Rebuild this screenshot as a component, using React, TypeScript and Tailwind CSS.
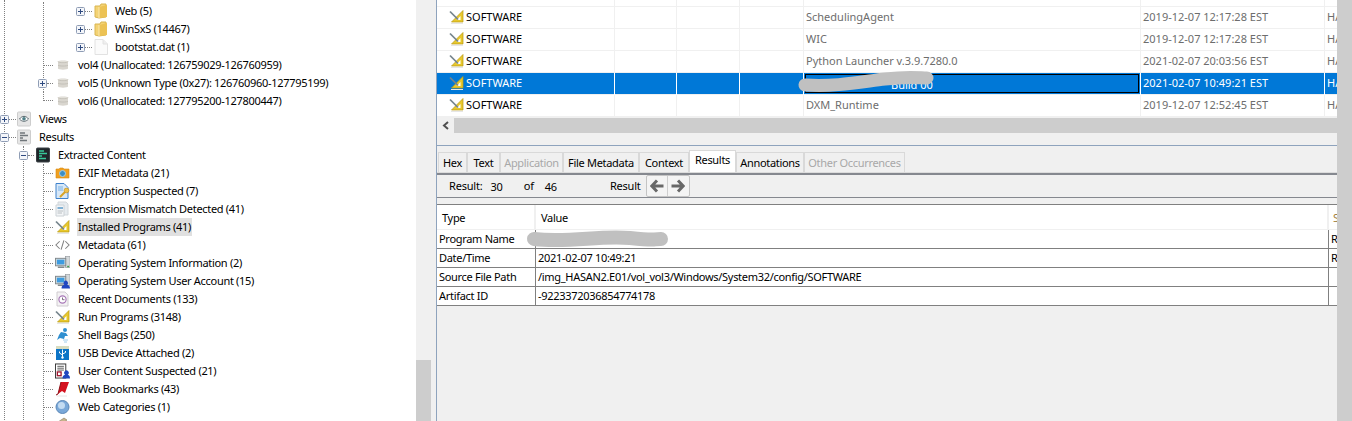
import type { ReactNode } from "react";

const FONT = "font-['Noto_Sans',sans-serif]";

function Box({ open = false }: { open?: boolean }) {
  return (
    <svg width="9" height="9" viewBox="0 0 9 9" className="relative z-10 -ml-[5px] shrink-0 bg-white">
      <rect x="0.5" y="0.5" width="8" height="8" rx="1" fill="#f4f6fa" stroke="#8f9db5" />
      <path d={open ? "M2 4.5H7" : "M2 4.5H7M4.5 2V7"} stroke="#2e4a80" />
    </svg>
  );
}

function Tick({ w = 9, last = false }: { w?: number; last?: boolean }) {
  return (
    <span
      className={
        last
          ? "h-[9px] self-start shrink-0 border-l border-b border-dotted border-[#808080]"
          : "shrink-0 border-t border-dotted border-[#808080]"
      }
      style={{ width: w }}
    />
  );
}

const Folder = () => (
  <svg width="14" height="16" viewBox="0 0 14 16">
    <path d="M1 3H6L7 1H12V14L5 15L1 14Z" fill="#f4d374" stroke="#d9b653" />
    <path d="M5 4L13 2V14L5 15Z" fill="#ecc254" />
    <path d="M5 4V15" stroke="#fbe9b0" />
  </svg>
);

const Page = () => (
  <svg width="14" height="16" viewBox="0 0 14 16">
    <path d="M1 0.5H9L13.5 5V15.5H1Z" fill="#fbfbfb" stroke="#e2e2e2" />
    <path d="M9 0.5V5H13.5" fill="#efefef" stroke="#e2e2e2" />
  </svg>
);

const Disk = () => (
  <svg width="12" height="12" viewBox="0 0 12 12">
    <path d="M1 2.5C1 1 11 1 11 2.5V9.5C11 11 1 11 1 9.5Z" fill="#d9d6cf" />
    <path d="M1 2.5C1 4 11 4 11 2.5" fill="#ece9e3" stroke="#b9b6ae" strokeWidth="0.7" />
    <path d="M1 6C1 7.4 11 7.4 11 6" fill="none" stroke="#b9b6ae" strokeWidth="0.7" />
  </svg>
);

const Tile = ({ dark = false, children }: { dark?: boolean; children: ReactNode }) => (
  <svg width="14" height="16" viewBox="0 0 14 16">
    <rect
      x="0.5"
      y="1"
      width="13"
      height="14"
      rx="1"
      fill={dark ? "#20262a" : "#e6e6e6"}
      stroke={dark ? "#3a4044" : "#cdcdcd"}
    />
    {children}
  </svg>
);

const Eye = () => (
  <Tile>
    <path d="M2.5 8C5 4.5 9 4.5 11.5 8C9 11 5 11 2.5 8Z" fill="#fff" stroke="#5c6a70" />
    <circle cx="7" cy="7.8" r="1.8" fill="#4f7f87" />
  </Tile>
);

const Report = () => (
  <Tile>
    <path d="M3 4H8M3 6.5H11M3 9H6M3 11.5H10" stroke="#70767a" strokeWidth="1.3" />
  </Tile>
);

const Extracted = () => (
  <Tile dark>
    <path d="M3 4H8M3 6.5H11M3 9H6M3 11.5H10" stroke="#38c89a" strokeWidth="1.3" />
  </Tile>
);

const Camera = () => (
  <svg width="15" height="16" viewBox="0 0 15 16">
    <path d="M1 4H4L5 3H8L9 4H14V13H1Z" fill="#f0a020" stroke="#d98a10" strokeWidth="0.6" />
    <circle cx="7.5" cy="8.5" r="3" fill="#3d8ec4" stroke="#a8d0e8" />
  </svg>
);

const KeyDoc = () => (
  <svg width="15" height="16" viewBox="0 0 15 16">
    <path d="M1 0.5H9L13 4.5V15.5H1Z" fill="#d8e8f8" stroke="#3f82cc" />
    <path d="M3 3H8V8H3Z" fill="#a8cdf0" />
    <path d="M5 14L10 9" stroke="#d8a428" strokeWidth="2" />
    <circle cx="11.5" cy="7.5" r="2.4" fill="#efc04a" stroke="#bd8b1b" strokeWidth="0.6" />
  </svg>
);

const Mismatch = () => (
  <svg width="15" height="16" viewBox="0 0 15 16">
    <path d="M3 1H11L13 3V14H3Z" fill="#e6ebef" stroke="#d2d7db" />
    <path d="M1 4H9V15H1Z" fill="#f3f5f7" stroke="#ccd2d6" />
    <path d="M2.5 7H8" stroke="#4d92c4" strokeWidth="1.4" />
    <path d="M2.5 10H8M2.5 12H7" stroke="#b8bec2" />
  </svg>
);

const Ruler = () => (
  <svg width="15" height="16" viewBox="0 0 15 16">
    <path d="M14 1.5V13H2.5Z" fill="#e8c82c" stroke="#b89a16" strokeWidth="0.7" />
    <path d="M11.5 7V11H7.5Z" fill="#fff" />
    <path d="M1 2.5L9 10.5" stroke="#75848c" strokeWidth="1.7" />
    <path d="M2 14.5H14" stroke="#e6e6e6" />
  </svg>
);

const Code = () => (
  <svg width="16" height="16" viewBox="0 0 16 16" fill="none" stroke="#7e7e7e" strokeWidth="1.1">
    <path d="M5 4L1 8L5 12M11 4L15 8L11 12M9.5 3L6.5 13" />
  </svg>
);

const Computer = ({ user = false }: { user?: boolean }) => (
  <svg width="16" height="16" viewBox="0 0 16 16">
    <rect x="11" y="1" width="5" height="12" fill="#d4d8da" stroke="#8a9094" strokeWidth="0.6" />
    <rect x="0.5" y="3" width="11" height="8" fill="#cfd8dc" stroke="#7e878b" />
    <rect x="2" y="4.5" width="8" height="5" fill="#3d9be0" />
    <path d="M3 12.5H10" stroke="#70787c" strokeWidth="1.4" />
    <rect x="13" y="11" width="2" height="1.5" fill={user ? "#d4d8da" : "#3aa04a"} />
    {user && <path d="M7 16C7 12 10 12 10 12A2.4 2.4 0 1 1 13 12C13 12 16 12 16 16Z" fill="#2046c0" />}
  </svg>
);

const Recent = () => (
  <svg width="15" height="16" viewBox="0 0 15 16">
    <path d="M2 1H10L13 4V15H2Z" fill="#f4f2f4" stroke="#d0ccd0" />
    <circle cx="7.5" cy="8.5" r="3.6" fill="#fff" stroke="#a878b8" strokeWidth="1.2" />
    <path d="M7.5 6.5V8.7H9.5" fill="none" stroke="#5c4a60" strokeWidth="0.8" />
  </svg>
);

const ShellBags = () => (
  <svg width="15" height="16" viewBox="0 0 15 16">
    <circle cx="10" cy="3" r="2" fill="#2f8fd0" />
    <path d="M6 5L11 6L13 9L10 9L9 12L5 11L2 13L4 8Z" fill="#2f8fd0" />
    <path d="M8 13H13M9 15H12" stroke="#9fcdec" />
  </svg>
);

const Usb = () => (
  <svg width="15" height="16" viewBox="0 0 15 16">
    <rect x="1" y="1" width="13" height="14" fill="#0d74c6" />
    <rect x="1" y="1" width="13" height="3" fill="#d8dcc0" />
    <path d="M7.5 4.5V12.5M7.5 10L4.5 8V6.5M7.5 9L10.5 7.5V6" fill="none" stroke="#fff" />
    <circle cx="7.5" cy="12.5" r="1.2" fill="#fff" />
  </svg>
);

const UserContent = () => (
  <svg width="16" height="16" viewBox="0 0 16 16">
    <rect x="0.5" y="0.5" width="11" height="15" fill="#fff" stroke="#333" />
    <path d="M2.5 3H9.5M2.5 5H9.5M2.5 7H9.5" stroke="#555" />
    <rect x="2.5" y="9" width="4" height="4" fill="#fff" stroke="#a01830" strokeWidth="1.4" />
    <path d="M8 16C8 12 11 12 11 12A2.4 2.4 0 1 1 13.5 12C13.5 12 16 12 16 16Z" fill="#2046c0" />
  </svg>
);

const Bookmark = () => (
  <svg width="15" height="16" viewBox="0 0 15 16">
    <path d="M6 1H14L10 12L7 10L3 13Z" fill="#d4121f" />
    <path d="M6 1L3 13L1 14" fill="none" stroke="#8c0c14" />
    <path d="M2 15H12" stroke="#e6e6e6" />
  </svg>
);

const Globe = () => (
  <svg width="15" height="16" viewBox="0 0 15 16">
    <circle cx="7.5" cy="8" r="6.5" fill="#7aa8d8" stroke="#5c88b8" />
    <circle cx="6.5" cy="6.5" r="3.5" fill="#c4dcf2" />
  </svg>
);

const Tan = () => (
  <svg width="15" height="16" viewBox="0 0 15 16">
    <path d="M3 5L9 1L12 3L7 7Z" fill="#c8b48c" stroke="#8a7a5a" strokeWidth="0.6" />
  </svg>
);

function Label({ children, selected = false }: { children: ReactNode; selected?: boolean }) {
  return (
    <span
      className={`h-[18px] whitespace-nowrap px-px leading-[18px] tracking-[-0.3px] ${
        selected ? "bg-[#e0e0e0]" : ""
      }`}
    >
      {children}
    </span>
  );
}

function Leaf({ icon, label, selected }: { icon: ReactNode; label: string; selected?: boolean }) {
  return (
    <div className="flex h-[18px] items-center">
      <Tick />
      <span className="ml-[2px] mr-[7px] flex w-[15px] justify-center">{icon}</span>
      <Label selected={selected}>{label}</Label>
    </div>
  );
}

function FileRow({ icon, label }: { icon: ReactNode; label: string }) {
  return (
    <div className="flex h-[18px] items-center pl-[37px]">
      <Box />
      <Tick w={7} />
      <span className="ml-[2px] mr-[6px] flex w-[14px] justify-center">{icon}</span>
      <Label>{label}</Label>
    </div>
  );
}

function Tree() {
  const leaves: [ReactNode, string][] = [
    [<Camera />, "EXIF Metadata (21)"],
    [<KeyDoc />, "Encryption Suspected (7)"],
    [<Mismatch />, "Extension Mismatch Detected (41)"],
    [<Ruler />, "Installed Programs (41)"],
    [<Code />, "Metadata (61)"],
    [<Computer />, "Operating System Information (2)"],
    [<Computer user />, "Operating System User Account (15)"],
    [<Recent />, "Recent Documents (133)"],
    [<Ruler />, "Run Programs (3148)"],
    [<ShellBags />, "Shell Bags (250)"],
    [<Usb />, "USB Device Attached (2)"],
    [<UserContent />, "User Content Suspected (21)"],
    [<Bookmark />, "Web Bookmarks (43)"],
    [<Globe />, "Web Categories (1)"],
    [<Tan />, "Web Cookies (6)"],
  ];

  return (
    <div className="h-[421px] w-[416px] shrink-0 overflow-hidden bg-white">
      <div className="ml-[4px] border-l border-dotted border-[#808080] pt-[2px]">
        <div className="ml-[38px]">
          <div className="border-l border-dotted border-[#808080]">
            <FileRow icon={<Folder />} label="Web (5)" />
            <FileRow icon={<Folder />} label="WinSxS (14467)" />
            <FileRow icon={<Page />} label="bootstat.dat (1)" />
            <div className="flex h-[18px] items-center">
              <Tick />
              <span className="ml-[4px] mr-[8px] flex w-[12px] justify-center"><Disk /></span>
              <Label>vol4 (Unallocated: 126759029-126760959)</Label>
            </div>
            <div className="flex h-[18px] items-center">
              <span className="-ml-px flex">
                <Box />
              </span>
              <Tick w={6} />
              <span className="ml-[4px] mr-[8px] flex w-[12px] justify-center"><Disk /></span>
              <Label>vol5 (Unknown Type (0x27): 126760960-127795199)</Label>
            </div>
          </div>
          <div className="flex h-[18px] items-center">
            <Tick w={10} last />
            <span className="ml-[4px] mr-[8px] flex w-[12px] justify-center"><Disk /></span>
            <Label>vol6 (Unallocated: 127795200-127800447)</Label>
          </div>
        </div>
        <div className="flex h-[18px] items-center">
          <Box />
          <Tick w={7} />
          <span className="ml-px mr-[7px] flex w-[14px] justify-center"><Eye /></span>
          <Label>Views</Label>
        </div>
        <div className="flex h-[18px] items-center">
          <Box open />
          <Tick w={7} />
          <span className="ml-px mr-[7px] flex w-[14px] justify-center"><Report /></span>
          <Label>Results</Label>
        </div>
        <div className="ml-[18px] border-l border-dotted border-[#808080]">
          <div className="flex h-[18px] items-center">
            <Box open />
            <Tick w={6} />
            <span className="ml-[2px] mr-[7px] flex w-[14px] justify-center"><Extracted /></span>
            <Label>Extracted Content</Label>
          </div>
          <div className="ml-[19px] border-l border-dotted border-[#808080]">
            {leaves.map(([icon, label]) => (
              <Leaf key={label} icon={icon} label={label} selected={label.startsWith("Installed")} />
            ))}
          </div>
        </div>
      </div>
    </div>
  );
}

const ROW_COLS = "grid grid-cols-[178px_62px_63px_64px_337px_184px_12px]";

type Row = { name: string; date: string; selected?: boolean };

const ROWS: Row[] = [
  { name: "SchedulingAgent", date: "2019-12-07 12:17:28 EST" },
  { name: "WIC", date: "2019-12-07 12:17:28 EST" },
  { name: "Python Launcher v.3.9.7280.0", date: "2021-02-07 20:03:56 EST" },
  { name: "Build 00", date: "2021-02-07 10:49:21 EST", selected: true },
  { name: "DXM_Runtime", date: "2019-12-07 12:52:45 EST" },
];

function ProgramRow({ row }: { row: Row }) {
  const line = row.selected ? "border-r border-white" : "border-r border-[#f0f0f0]";
  const tone = row.selected ? "text-white" : "text-[#6d6d6d]";
  return (
    <div
      className={`${ROW_COLS} h-[22px] border-b leading-[20px] ${
        row.selected ? "border-[#f0f0f0] bg-[#0078d7]" : "border-[#f0f0f0] bg-white"
      }`}
    >
      <div className={`flex items-center pb-[2px] pl-[12px] ${line} ${row.selected ? "text-white" : "text-black"}`}>
        <Ruler />
        <span className="ml-[2px]">SOFTWARE</span>
      </div>
      <div className={line} />
      <div className={line} />
      <div className={line} />
      {row.selected ? (
        <div className={`${line} p-px`}>
          <div className="h-[19px] overflow-hidden border border-black pl-[85px] leading-[20px] text-white">
            {row.name}
          </div>
        </div>
      ) : (
        <div className={`${line} pl-[2px] ${tone}`}>{row.name}</div>
      )}
      <div className={`${line} pl-[2px] ${tone}`}>{row.date}</div>
      <div className={`overflow-hidden pl-[2px] ${tone}`}>HASAN</div>
    </div>
  );
}

const TABS: { label: string; width: string; disabled?: boolean; active?: boolean }[] = [
  { label: "Hex", width: "w-[29px]" },
  { label: "Text", width: "w-[33px]" },
  { label: "Application", width: "w-[63px]", disabled: true },
  { label: "File Metadata", width: "w-[76px]" },
  { label: "Context", width: "w-[50px]" },
  { label: "Results", width: "w-[47px]", active: true },
  { label: "Annotations", width: "w-[68px]" },
  { label: "Other Occurrences", width: "w-[101px]", disabled: true },
];

function Tabs() {
  return (
    <div className="flex h-[26px] items-end pl-px tracking-[-0.3px]">
      {TABS.map((t) => (
        <div
          key={t.label}
          className={`${t.width} shrink-0 whitespace-nowrap border border-b-0 border-[#d9d9d9] text-center ${
            t.active
              ? "h-[22px] bg-white leading-[18px] text-black"
              : `h-[20px] leading-[19px] ${t.disabled ? "text-[#a8a8a8]" : "text-black"}`
          }`}
        >
          {t.label}
        </div>
      ))}
    </div>
  );
}

function NavButton({ d }: { d: string }) {
  return (
    <span className="flex h-[20px] w-[21px] items-center justify-center">
      <svg width="14" height="14" viewBox="0 0 14 14" fill="none" stroke="#686868" strokeWidth="3">
        <path d={d} />
      </svg>
    </span>
  );
}

function Toolbar() {
  return (
    <div className="flex h-[23px] items-center border-b border-[#85888f] pl-[12px] tracking-[-0.2px]">
      <span>Result:</span>
      <span className="ml-[8px] mt-[2px]">30</span>
      <span className="ml-[21px]">of</span>
      <span className="ml-[11px] mt-[2px]">46</span>
      <span className="ml-[53px]">Result</span>
      <div className="ml-[5px] flex divide-x divide-[#cfcfcf] rounded-[2px] border border-[#c4c4c4] bg-[#f4f4f4]">
        <NavButton d="M7 1.5L1.8 7L7 12.5M2 7H13.5" />
        <NavButton d="M7 1.5L12.2 7L7 12.5M12 7H0.5" />
      </div>
    </div>
  );
}

const DETAILS: [string, string, string][] = [
  ["Program Name", "", "R"],
  ["Date/Time", "2021-02-07 10:49:21", "R"],
  ["Source File Path", "/img_HASAN2.E01/vol_vol3/Windows/System32/config/SOFTWARE", ""],
  ["Artifact ID", "-9223372036854774178", ""],
];

function Details() {
  return (
    <div className="mt-[6px] border-t border-[#808080] text-black tracking-[-0.3px]">
      <div className="grid h-[25px] grid-cols-[99px_793px_8px] border-b border-[#f0f0f0] bg-white leading-[25px]">
        <div className="border-r-2 border-[#f0f0f0] pl-[5px]">Type</div>
        <div className="border-r-2 border-[#f0f0f0] pl-[5px]">Value</div>
        <div className="overflow-hidden pl-[4px] text-[#a08040]">S</div>
      </div>
      {DETAILS.map(([type, value, extra]) => (
        <div key={type} className="grid h-[19px] grid-cols-[99px_793px_8px] border-b border-[#808080] bg-white leading-[18px]">
          <div className="border-r border-[#808080] pl-[2px]">{type}</div>
          <div className="border-r border-[#808080] pl-[2px]">{value}</div>
          <div className="overflow-hidden pl-[2px]">{extra}</div>
        </div>
      ))}
    </div>
  );
}

export default function App() {
  return (
    <div className={`relative flex h-[421px] w-[1352px] overflow-hidden bg-[#f0f0f0] text-[11px] ${FONT}`}>
      <Tree />
      <div className="flex w-[15px] shrink-0 flex-col">
        <div className="flex-1" />
        <div className="h-[61px] bg-[#cdcdcd]" />
      </div>
      <div className="w-[5px] shrink-0" />
      <div className="flex w-[901px] shrink-0 flex-col border-l border-[#8ea3bd]">
        <div className="h-[146px] shrink-0 border-b border-[#8ea3bd]">
          <div className={`${ROW_COLS} h-[7px] border-b border-[#f0f0f0] bg-white`}>
            {[0, 1, 2, 3, 4, 5].map((c) => (
              <div key={c} className="border-r border-[#f0f0f0]" />
            ))}
          </div>
          {ROWS.map((row) => (
            <ProgramRow key={row.date + row.name} row={row} />
          ))}
          <div className="mt-px flex h-[15px] items-center bg-[#cdcdcd]">
            <div className="flex h-[15px] w-[17px] items-center justify-center bg-[#f0f0f0]">
              <svg width="8" height="9" viewBox="0 0 8 9" fill="none" stroke="#505050" strokeWidth="2">
                <path d="M6 1L2 4.5L6 8" />
              </svg>
            </div>
          </div>
        </div>
        <Tabs />
        <div className="h-px bg-[#dcdcdc]" />
        <div className="h-[2px] bg-[#85888f]" />
        <Toolbar />
        <Details />
      </div>
      <div className="w-[15px] shrink-0 bg-[#cdcdcd]" />
      <svg className="pointer-events-none absolute left-0 top-0" width="1352" height="421" fill="none" stroke="#c0c0c0" strokeLinecap="round">
        <path d="M805 85C835 87 860 82 885 79S920 78 927 78" strokeWidth="13" />
        <path d="M534 239C570 243 600 235 630 238S650 239 661 239" strokeWidth="14" />
      </svg>
    </div>
  );
}
